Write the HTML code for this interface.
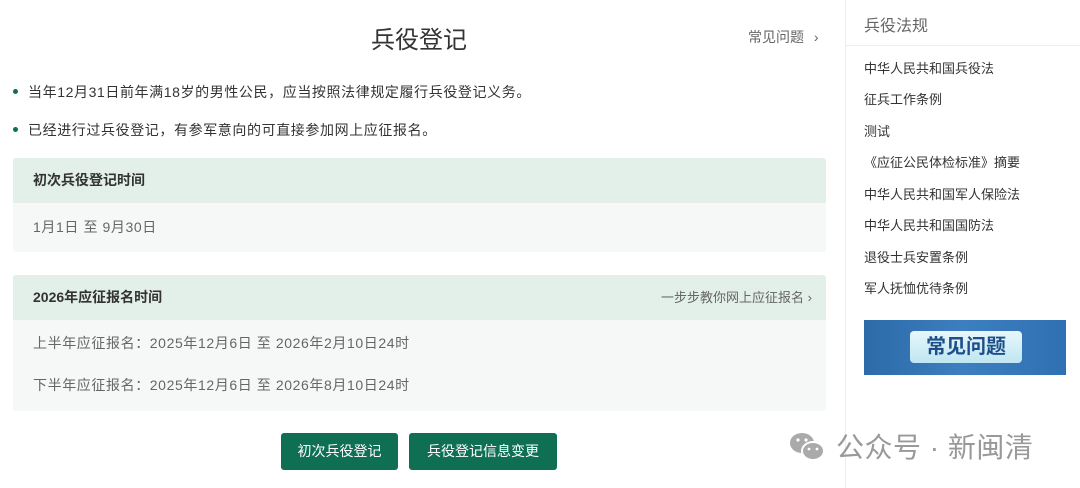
<!DOCTYPE html>
<html><head><meta charset="utf-8"><style>
*{margin:0;padding:0;box-sizing:border-box}
body{width:1080px;height:488px;background:#fff;font-family:"Liberation Sans","Noto Sans CJK SC",sans-serif;color:#333;position:relative;overflow:hidden}
.a{position:absolute;white-space:nowrap}
.title{left:0;width:838px;text-align:center;top:20px;font-size:24px;color:#333}
.faq{left:748px;top:27px;font-size:14px;color:#666}
.dot{width:5px;height:5px;border-radius:50%;background:#0e6f52}
.b{font-size:14px;color:#333;letter-spacing:0.6px}
.card{left:13px;width:813px;background:#f5f8f7;border-radius:3px;overflow:hidden}
.card .h{background:#e3efe9;height:45px;padding-left:20px;line-height:45px;font-size:14px;font-weight:bold;color:#333;position:relative}
.card .r{font-size:14px;color:#666;padding-left:20px;letter-spacing:0.6px}
.btn{background:#0e6f52;color:#fff;font-size:14px;text-align:center;line-height:37px;height:37px;border-radius:3px;top:433px}
.side{left:845px;top:0;width:1px;height:488px;background:#eee}
.sl{left:864px;font-size:13px;color:#333}
</style></head><body>
<div class="a title">兵役登记</div>
<div class="a faq">常见问题 <span style="margin-left:6px">&#x203A;</span></div>
<div class="a dot" style="left:13px;top:89px"></div>
<div class="a b" style="left:28px;top:82px">当年12月31日前年满18岁的男性公民，应当按照法律规定履行兵役登记义务。</div>
<div class="a dot" style="left:13px;top:127px"></div>
<div class="a b" style="left:28px;top:120px">已经进行过兵役登记，有参军意向的可直接参加网上应征报名。</div>
<div class="a card" style="top:158px;height:94px"><div class="h">初次兵役登记时间</div><div class="r" style="line-height:49px">1月1日 至 9月30日</div></div>
<div class="a card" style="top:275px;height:136px"><div class="h">2026年应征报名时间<span style="position:absolute;right:14px;top:0;font-weight:normal;font-size:13px;color:#666">一步步教你网上应征报名 &#x203A;</span></div>
<div class="r" style="margin-top:8px;line-height:31px">上半年应征报名：2025年12月6日 至 2026年2月10日24时</div>
<div class="r" style="line-height:31px;margin-top:11px">下半年应征报名：2025年12月6日 至 2026年8月10日24时</div></div>
<div class="a btn" style="left:281px;width:117px">初次兵役登记</div>
<div class="a btn" style="left:409px;width:148px">兵役登记信息变更</div>
<div class="a side"></div>
<div class="a" style="left:864px;top:12px;font-size:16px;color:#666">兵役法规</div>
<div class="a" style="left:846px;top:45px;width:234px;height:1px;background:#eee"></div>
<div class="a sl" style="top:58px">中华人民共和国兵役法</div>
<div class="a sl" style="top:89px">征兵工作条例</div>
<div class="a sl" style="top:121px">测试</div>
<div class="a sl" style="top:152px">《应征公民体检标准》摘要</div>
<div class="a sl" style="top:184px">中华人民共和国军人保险法</div>
<div class="a sl" style="top:215px">中华人民共和国国防法</div>
<div class="a sl" style="top:247px">退役士兵安置条例</div>
<div class="a sl" style="top:278px">军人抚恤优待条例</div>
<div class="a" style="left:864px;top:320px;width:202px;height:55px;background:linear-gradient(90deg,#2d6aa8,#3c7fc0 50%,#2f70b3)"></div>
<div class="a" style="left:910px;top:331px;width:112px;height:32px;border-radius:4px;background:linear-gradient(#e8f7fb,#bfe6f2);color:#1d4f8a;font-weight:bold;font-size:20px;text-align:center;line-height:32px">常见问题</div>
<svg class="a" style="left:788px;top:430px" width="40" height="34" viewBox="0 0 40 34"><ellipse cx="14" cy="13" rx="12" ry="10" fill="#aaa"/><ellipse cx="25" cy="21" rx="11" ry="9" fill="#aaa" stroke="#fff" stroke-width="2"/><circle cx="10" cy="10" r="1.6" fill="#fff"/><circle cx="18" cy="10" r="1.6" fill="#fff"/><circle cx="21" cy="19" r="1.4" fill="#fff"/><circle cx="29" cy="19" r="1.4" fill="#fff"/></svg>
<div class="a" style="left:836px;top:426px;font-size:28px;color:#999;letter-spacing:0.5px">公众号 · 新闽清</div>
</body></html>
